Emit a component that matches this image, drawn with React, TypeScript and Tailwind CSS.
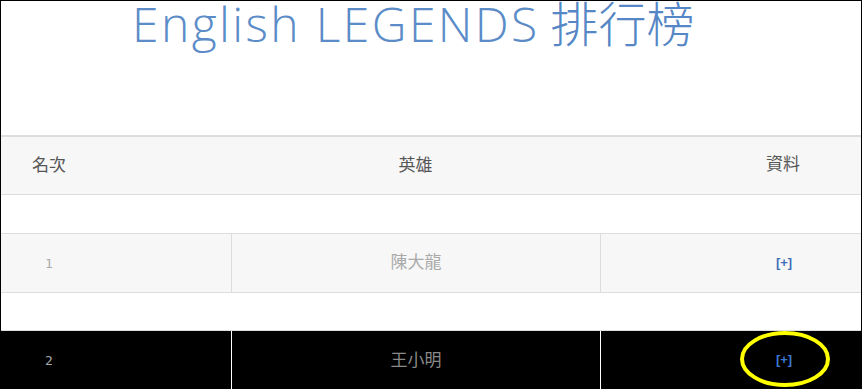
import type { ReactNode } from 'react'

const cjk = "'Noto Sans CJK TC', 'Noto Sans', sans-serif"

type Row = { rank: string; hero: string; dark?: boolean }

const rows: Row[] = [
  { rank: '1', hero: '陳大龍' },
  { rank: '2', hero: '王小明', dark: true },
]

function Cells({ a, b, c, divider }: { a: ReactNode; b: ReactNode; c: ReactNode; divider?: string }) {
  return (
    <div className="flex h-full items-stretch">
      <div className="flex w-[230px] items-center pb-[4px]">
        <div className="w-[96px] text-center">{a}</div>
      </div>
      <div className={`flex w-[369px] items-center justify-center pb-[4px] ${divider ?? ''}`}>{b}</div>
      <div className={`flex flex-1 items-center pb-[6px] ${divider ?? ''}`}>
        <div className="ml-[163px] w-[40px] text-center">{c}</div>
      </div>
    </div>
  )
}

function PlusLink({ dark }: { dark?: boolean }) {
  return (
    <span
      className={`text-[13px] font-bold ${dark ? 'text-[#3b78cf]' : 'text-[#4070b8]'}`}
      style={{ fontFamily: "'Liberation Sans', sans-serif" }}
    >
      [+]
    </span>
  )
}

export default function App() {
  return (
    <div className="relative h-[389px] w-[862px] overflow-hidden border-x border-t border-black bg-white" style={{ fontFamily: cjk }}>
      <div className="flow-root h-[134px]">
        <h1 className="-mt-[6px] pl-[131px] text-[48px] leading-[1.1] text-[#5b8cc8]">
          <span className="font-light tracking-[2.4px]" style={{ fontFamily: "'Open Sans', 'Noto Sans', sans-serif" }}>
            English LEGENDS
          </span>{' '}
          <span className="font-light text-[#5586c5]" style={{ fontFamily: cjk }}>
            排行榜
          </span>
        </h1>
      </div>

      <div className="h-[60px] border-y border-t-2 border-[#dddddd] bg-[#f7f7f7] text-[17px] text-[#555555]">
        <Cells a="名次" b="英雄" c="資料" />
      </div>

      <div className="h-[38px]" />

      {rows.map((r, i) => (
        <div key={r.rank}>
          <div
            className={
              r.dark
                ? 'h-[60px] border-t border-[#dddddd] bg-black'
                : 'h-[60px] border-y border-[#dddddd] bg-[#f7f7f7]'
            }
          >
            <Cells
              divider={r.dark ? 'border-l border-white' : 'border-l border-[#dddddd]'}
              a={
                <span className="text-[13px] text-[#aaaaaa]" style={{ fontFamily: "'DejaVu Sans Mono', monospace" }}>
                  {r.rank}
                </span>
              }
              b={<span className={`text-[17px] ${r.dark ? 'text-[#8a8a8a]' : 'text-[#aaaaaa]'}`}>{r.hero}</span>}
              c={<PlusLink dark={r.dark} />}
            />
          </div>
          {i === 0 && <div className="h-[37px]" />}
        </div>
      ))}

      <svg className="pointer-events-none absolute left-[738px] top-[329px]" width="92" height="60" viewBox="0 0 92 60">
        <ellipse cx="46" cy="29" rx="43" ry="26" fill="none" stroke="#ffff00" strokeWidth="4" />
      </svg>
    </div>
  )
}
